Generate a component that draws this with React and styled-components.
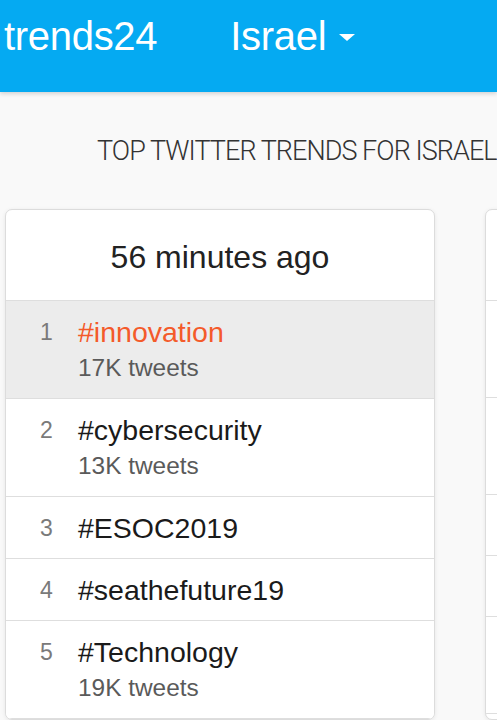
import React from "react";
import styled, { createGlobalStyle } from "styled-components";

const Global = createGlobalStyle`
  html, body { margin: 0; padding: 0; }
  body {
    background: #f9f9f9;
    font-family: "Liberation Sans", Arial, sans-serif;
    overflow: hidden;
    width: 497px;
  }
`;

const Header = styled.header`
  height: 92px;
  background: #05aaf2;
  box-shadow: 0 2px 4px rgba(0, 0, 0, 0.15);
  display: flex;
  align-items: flex-start;
  padding: 13px 0 0 4px;
  box-sizing: border-box;
  color: #fff;
  position: relative;
  z-index: 1;
`;

const Logo = styled.div`
  font-size: 40px;
  line-height: 46px;
  letter-spacing: -0.3px;
`;

const Country = styled.div`
  margin-left: 73px;
  font-size: 40px;
  line-height: 46px;
  letter-spacing: -0.3px;
  display: flex;
  align-items: center;
  gap: 13px;
`;

const Caret = styled.span`
  width: 0;
  height: 0;
  border-left: 8px solid transparent;
  border-right: 8px solid transparent;
  border-top: 7px solid #fff;
  margin-top: 3px;
`;

const Title = styled.h1`
  margin: 0;
  padding: 43px 0 0 97px;
  height: 117px;
  box-sizing: border-box;
  font-family: "Roboto", "Liberation Sans", sans-serif;
  font-weight: 300;
  font-size: 27px;
  line-height: 32px;
  color: #333;
  white-space: nowrap;
  letter-spacing: -0.95px;
`;

const Columns = styled.div`
  display: grid;
  grid-template-columns: 430px 430px;
  gap: 50px;
  padding-left: 5px;
`;

const Card = styled.section`
  background: #fff;
  border: 1px solid #dcdcdc;
  border-radius: 7px;
  box-shadow: 0 1px 4px rgba(0, 0, 0, 0.08);
  overflow: hidden;
`;

const CardHead = styled.h3`
  margin: 0;
  height: 91px;
  display: flex;
  align-items: center;
  justify-content: center;
  font-size: 32px;
  font-weight: 400;
  color: #222;
  border-bottom: 1px solid #dedede;
  padding-top: 4px;
  box-sizing: border-box;
`;

const List = styled.ol`
  margin: 0;
  padding: 0;
  list-style: none;
`;

const Row = styled.li`
  display: flex;
  padding: 13px 0 12px 30px;
  min-height: ${(p) => (p.$tall ? "97px" : "61px")};
  box-sizing: border-box;
  border-bottom: 1px solid #dedede;
  background: ${(p) => (p.$active ? "#ececec" : "#fff")};
`;

const Rank = styled.span`
  width: 42px;
  font-size: 23px;
  line-height: 36px;
  color: #7a7a7a;
  font-weight: 300;
  padding-left: 4px;
  box-sizing: border-box;
`;

const Body = styled.div`
  display: flex;
  flex-direction: column;
`;

const Trend = styled.a`
  font-size: 28.5px;
  line-height: 36px;
  color: ${(p) => (p.$active ? "#f45a2a" : "#1a1a1a")};
  text-decoration: none;
`;

const Count = styled.span`
  font-size: 24.4px;
  line-height: 36px;
  color: #5a5a5a;
`;

const trends = [
  { t: "#innovation", c: "17K tweets" },
  { t: "#cybersecurity", c: "13K tweets" },
  { t: "#ESOC2019" },
  { t: "#seathefuture19" },
  { t: "#Technology", c: "19K tweets" },
];

function TrendCard({ time, items, activeIndex }) {
  return (
    <Card>
      <CardHead>{time}</CardHead>
      <List>
        {items.map((it, i) => (
          <Row key={i} $active={i === activeIndex} $tall={!!it.c}>
            <Rank>{i + 1}</Rank>
            <Body>
              <Trend href="#" $active={i === activeIndex}>
                {it.t}
              </Trend>
              {it.c && <Count>{it.c}</Count>}
            </Body>
          </Row>
        ))}
      </List>
    </Card>
  );
}

/* The next hour's card only peeks in at the right edge; its text lies off screen. */
function PeekCard({ shape }) {
  return (
    <Card aria-hidden="true">
      <CardHead />
      <List>
        {shape.map((tall, i) => (
          <Row key={i} $tall={tall} />
        ))}
      </List>
    </Card>
  );
}

export default function App() {
  return (
    <>
      <Global />
      <Header>
        <Logo>trends24</Logo>
        <Country>
          Israel <Caret />
        </Country>
      </Header>
      <Title>TOP TWITTER TRENDS FOR ISRAEL</Title>
      <Columns>
        <TrendCard time="56 minutes ago" items={trends} activeIndex={0} />
        <PeekCard shape={[true, true, false, false, true]} />
      </Columns>
    </>
  );
}
